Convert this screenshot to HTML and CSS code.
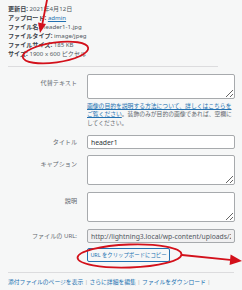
FILE: index.html
```html
<!DOCTYPE html>
<html lang="ja">
<head>
    <meta charset="UTF-8">
    <meta name="viewport" content="width=device-width, initial-scale=1.0">
    <title>添付ファイルの詳細</title>
    <link rel="stylesheet" href="styles.css">
</head>
<body>
    <div class="details">
        <div class="detail-row"><strong>更新日:</strong> 2021年4月12日</div>
        <div class="detail-row"><strong>アップロード:</strong> <a href="#">admin</a></div>
        <div class="detail-row"><strong>ファイル名:</strong> header1-1.jpg</div>
        <div class="detail-row"><strong>ファイルタイプ:</strong> image/jpeg</div>
        <div class="detail-row"><strong>ファイルサイズ:</strong> 185 KB</div>
        <div class="detail-row"><strong>サイズ:</strong> 1900 x 600 ピクセル</div>
    </div>

    <div class="settings">
        <div class="setting setting-alt">
            <label for="alt">代替テキスト</label>
            <div class="field">
                <textarea id="alt" class="alt-text"></textarea>
                <p class="help"><a href="#">画像の目的を説明する方法について、詳しくはこちらをご覧ください</a>。装飾のみが目的の画像であれば、空欄にしてください。</p>
            </div>
        </div>
        <div class="setting setting-title">
            <label class="label-input" for="title">タイトル</label>
            <div class="field">
                <input type="text" id="title" value="header1">
            </div>
        </div>
        <div class="setting setting-caption">
            <label for="caption">キャプション</label>
            <div class="field">
                <textarea id="caption"></textarea>
            </div>
        </div>
        <div class="setting setting-desc">
            <label for="desc">説明</label>
            <div class="field">
                <textarea id="desc"></textarea>
            </div>
        </div>
        <div class="setting setting-url">
            <label class="label-input" for="url">ファイルの URL:</label>
            <div class="field">
                <input type="text" id="url" class="readonly" value="http://lightning3.local/wp-content/uploads/2021/04/header1-1.jpg" readonly>
                <button type="button" class="copy-btn">URL をクリップボードにコピー</button>
            </div>
        </div>
    </div>

    <div class="actions">
        <a href="#">添付ファイルのページを表示</a> | <a href="#">さらに詳細を編集</a> | <a href="#">ファイルをダウンロード</a> |
    </div>

    <!-- red annotation marks drawn over the screenshot -->
    <svg class="marks" width="242" height="290" viewBox="0 0 242 290">
        <g fill="none" stroke="#d3111b" stroke-width="1.8" stroke-linecap="round">
            <line x1="47" y1="0" x2="42.5" y2="23"/>
            <ellipse cx="55.5" cy="52.5" rx="33" ry="10" transform="rotate(-8 55.5 52.5)"/>
            <ellipse cx="129.5" cy="256" rx="52" ry="11.5" transform="rotate(-2 129.5 256)"/>
            <line x1="182" y1="255" x2="230" y2="259.8"/>
        </g>
        <g fill="#d3111b">
            <polygon points="40,33 46,24 38,22.4"/>
            <polygon points="242,261 230.6,254.6 229.6,265"/>
        </g>
    </svg>
</body>
</html>
```

FILE: styles.css
```css
/* Attachment details panel */
body {
    font-family: "Noto Sans", "Noto Sans CJK JP", sans-serif;
    font-size: 6.1px;
    color: #50575e;
    background-color: #f6f7f7;
    margin: 0;
    position: relative;
    width: 242px;
    height: 290px;
    overflow: hidden;
}

a {
    color: #2271b1;
}

.details {
    margin: 0 24px 0 8px;
    padding: 3.5px 0 8.5px;
    border-bottom: 1px solid #dcdcde;
}

.detail-row {
    line-height: 9px;
    white-space: nowrap;
}

.detail-row strong {
    color: #3c434a;
    font-weight: bold;
}

.settings {
    padding-top: 7px;
}

.setting {
    display: flex;
}

.setting label {
    width: 77px;
    padding-right: 10px;
    text-align: right;
    color: #646970;
    line-height: 8px;
    padding-top: 4.5px;
    flex-shrink: 0;
}

.setting .label-input {
    padding-top: 3px;
}

.field {
    width: 148px;
}

textarea,
input[type="text"] {
    display: block;
    box-sizing: border-box;
    width: 100%;
    margin: 0;
    border: 1px solid #a7aaad;
    border-radius: 2px;
    background: #fff;
    font-family: "Noto Sans", "Noto Sans CJK JP", sans-serif;
    font-size: 6.8px;
    color: #2c3338;
}

textarea {
    resize: vertical;
    padding: 2px 3px;
}

input[type="text"] {
    height: 14px;
    padding: 0 3px;
}

.alt-text {
    height: 25px;
}

.help {
    margin: 2.5px 0 0;
    line-height: 8.5px;
    font-size: 5.8px;
    color: #646970;
}

.setting-alt {
    margin-bottom: 8px;
}

.setting-title {
    margin-bottom: 6px;
}

.setting-caption,
.setting-desc {
    margin-bottom: 7px;
}

.setting-caption textarea,
.setting-desc textarea {
    height: 30px;
}

.readonly {
    background-color: #f0f0f1 !important;
    color: #50575e !important;
    white-space: nowrap;
    overflow: hidden;
}

.copy-btn {
    display: block;
    margin-top: 5px;
    height: 14px;
    width: 83px;
    padding: 0;
    border: 1px solid #2271b1;
    border-radius: 2px;
    background: #f6f7f7;
    color: #2271b1;
    font-family: "Noto Sans", "Noto Sans CJK JP", sans-serif;
    font-size: 5.4px;
    cursor: pointer;
}

.actions {
    margin: 10px 8px 0;
    padding-top: 5px;
    border-top: 1px solid #dcdcde;
    line-height: 8px;
    font-size: 5.8px;
    color: #a7aaad;
    white-space: nowrap;
}

.actions a {
    text-decoration: none;
}

.marks {
    position: absolute;
    left: 0;
    top: 0;
    pointer-events: none;
}
```
